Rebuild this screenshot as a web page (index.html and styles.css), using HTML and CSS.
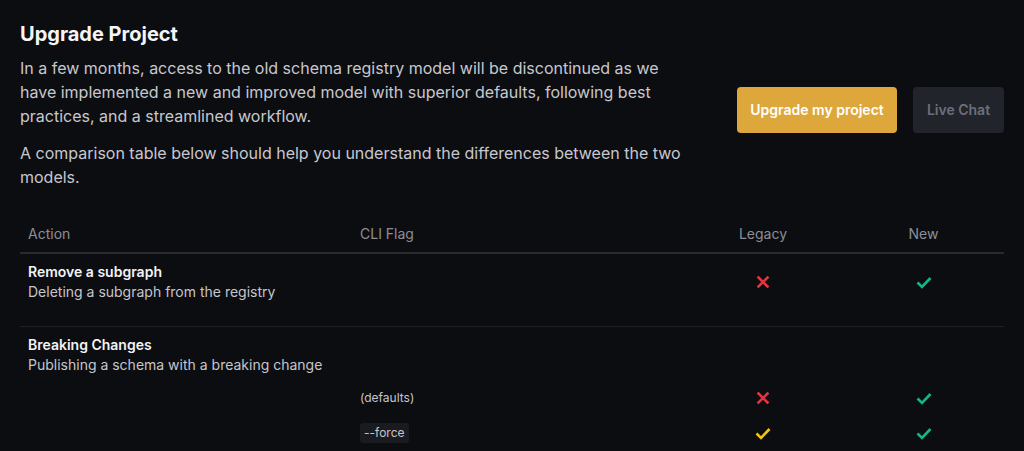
FILE: index.html
```html
<!DOCTYPE html>
<html lang="en">
<head>
<meta charset="utf-8">
<title>Upgrade Project</title>
<link rel="stylesheet" href="styles.css">
</head>
<body>
<main class="page">
  <section class="intro">
    <div class="intro-text">
      <h1 class="title">Upgrade Project</h1>
      <p class="para">In a few months, access to the old schema registry model will be discontinued as we have implemented a new and improved model with superior defaults, following best practices, and a streamlined workflow.</p>
      <p class="para para-second">A comparison table below should help you understand the differences between the two models.</p>
    </div>
    <div class="actions">
      <button class="btn btn-primary">Upgrade my project</button>
      <button class="btn btn-secondary">Live Chat</button>
    </div>
  </section>

  <section class="table">
    <div class="row head">
      <div class="cell">Action</div>
      <div class="cell">CLI Flag</div>
      <div class="cell center">Legacy</div>
      <div class="cell center">New</div>
    </div>

    <div class="group">
      <div class="row main">
        <div class="cell action">
          <div class="action-title">Remove a subgraph</div>
          <div class="action-desc">Deleting a subgraph from the registry</div>
        </div>
        <div class="cell"></div>
        <div class="cell center">
          <svg class="icon" viewBox="0 0 16 16"><path d="M3.5 3.5l9 9M12.5 3.5l-9 9" stroke="#e8333f" stroke-width="2.6" stroke-linecap="square" fill="none"/></svg>
        </div>
        <div class="cell center">
          <svg class="icon" viewBox="0 0 16 16"><path d="M1.5 8.5l4.5 4.5L14.5 4" stroke="#13b787" stroke-width="2.6" fill="none"/></svg>
        </div>
      </div>
    </div>

    <div class="group last">
      <div class="row main">
        <div class="cell action">
          <div class="action-title">Breaking Changes</div>
          <div class="action-desc">Publishing a schema with a breaking change</div>
        </div>
      </div>
      <div class="subrows">
        <div class="row sub">
          <div class="cell"></div>
          <div class="cell"><span class="flag">(defaults)</span></div>
          <div class="cell center">
            <svg class="icon" viewBox="0 0 16 16"><path d="M3.5 3.5l9 9M12.5 3.5l-9 9" stroke="#e8333f" stroke-width="2.6" stroke-linecap="square" fill="none"/></svg>
          </div>
          <div class="cell center">
            <svg class="icon" viewBox="0 0 16 16"><path d="M1.5 8.5l4.5 4.5L14.5 4" stroke="#13b787" stroke-width="2.6" fill="none"/></svg>
          </div>
        </div>
        <div class="row sub">
          <div class="cell"></div>
          <div class="cell"><code class="flag chip">--force</code></div>
          <div class="cell center">
            <svg class="icon" viewBox="0 0 16 16"><path d="M1.5 8.5l4.5 4.5L14.5 4" stroke="#f5c211" stroke-width="2.6" fill="none"/></svg>
          </div>
          <div class="cell center">
            <svg class="icon" viewBox="0 0 16 16"><path d="M1.5 8.5l4.5 4.5L14.5 4" stroke="#13b787" stroke-width="2.6" fill="none"/></svg>
          </div>
        </div>
      </div>
    </div>
  </section>
</main>
</body>
</html>
```

FILE: styles.css
```css
* { box-sizing: border-box; }

html, body {
  margin: 0;
  padding: 0;
  background: #0c0d11;
}

body {
  font-family: Inter, "Noto Sans", "Liberation Sans", sans-serif;
  color: #f2f2f4;
  -webkit-font-smoothing: antialiased;
}

.page {
  padding: 20px 20px 0 20px;
}

.intro {
  display: flex;
  align-items: center;
  justify-content: space-between;
}

.intro-text {
  max-width: 672px;
}

.title {
  margin: 0;
  font-size: 20px;
  line-height: 28px;
  font-weight: 700;
  color: #f5f5f6;
}

.para {
  margin: 8px 0 0 0;
  font-size: 16px;
  line-height: 24px;
  color: #c7c8ce;
}

.para-second {
  margin-top: 13px;
}

.actions {
  display: flex;
  gap: 16px;
  margin-top: 10px;
}

.btn {
  height: 46px;
  border: 0;
  border-radius: 4px;
  font-family: inherit;
  font-size: 14px;
  font-weight: 600;
  padding: 0 13px;
  cursor: pointer;
}

.btn-primary {
  width: 160px;
  background: #dea73b;
  color: #ffffff;
}

.btn-secondary {
  width: 91px;
  background: #22242b;
  color: #6c6f79;
}

.table {
  margin-top: 35px;
}

.row {
  display: grid;
  grid-template-columns: 332px 331px 160px 1fr;
  align-items: center;
}

.cell {
  padding: 0 8px;
  font-size: 14px;
  line-height: 20px;
}

.center {
  display: flex;
  justify-content: center;
  align-items: center;
}

.head {
  padding-bottom: 8px;
  border-bottom: 2px solid #292a31;
}

.head .cell {
  color: #8c8e97;
}

.group {
  padding: 8px 0 24px 0;
  border-bottom: 1px solid #1f2027;
}

.group.last {
  border-bottom: 0;
  padding-bottom: 0;
}

.action-title {
  font-weight: 600;
  color: #f3f3f5;
}

.action-desc {
  color: #c5c6cc;
}

.subrows {
  margin-top: 5px;
}

.sub {
  height: 35px;
}

.flag {
  display: inline-block;
  font-family: Inter, "Noto Sans", "Liberation Sans", sans-serif;
  font-size: 12px;
  line-height: 20px;
  color: #c5c6cc;
}

.chip {
  background: #1a1b21;
  border-radius: 3px;
  padding: 0 4px;
}

.icon {
  width: 16px;
  height: 16px;
  display: block;
}
```
